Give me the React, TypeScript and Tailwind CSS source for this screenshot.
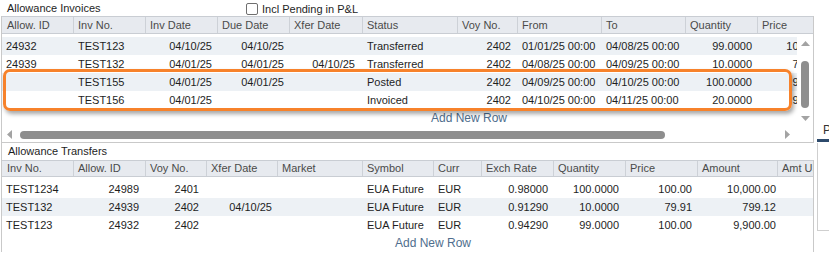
import type { ReactNode } from "react";

type Col = { label: string; w: string; pad: string; right?: boolean };

// widths include the 1px header divider, so the dividers land where the grid draws them
const INVOICE_COLS: Col[] = [
  { label: "Allow. ID", w: "w-[72px]", pad: "pl-[4px]" },
  { label: "Inv No.", w: "w-[72px]", pad: "pl-[4px]" },
  { label: "Inv Date", w: "w-[72px]", pad: "pr-[6px]", right: true },
  { label: "Due Date", w: "w-[72px]", pad: "pr-[6px]", right: true },
  { label: "Xfer Date", w: "w-[73px]", pad: "pr-[8px]", right: true },
  { label: "Status", w: "w-[95px]", pad: "pl-[4px]" },
  { label: "Voy No.", w: "w-[60px]", pad: "pr-[7px]", right: true },
  { label: "From", w: "w-[84px]", pad: "pl-[4px]" },
  { label: "To", w: "w-[84px]", pad: "pl-[4px]" },
  { label: "Quantity", w: "w-[72px]", pad: "pr-[6px]", right: true },
  { label: "Price", w: "w-[72px]", pad: "pr-[10px]", right: true },
];

const INVOICE_ROWS = [
  ["24932", "TEST123", "04/10/25", "04/10/25", "", "Transferred", "2402", "01/01/25 00:00", "04/08/25 00:00", "99.0000", "100.00"],
  ["24939", "TEST132", "04/01/25", "04/01/25", "04/10/25", "Transferred", "2402", "04/08/25 00:00", "04/09/25 00:00", "10.0000", "79.91"],
  ["", "TEST155", "04/01/25", "04/01/25", "", "Posted", "2402", "04/09/25 00:00", "04/10/25 00:00", "100.0000", "95.00"],
  ["", "TEST156", "04/01/25", "", "", "Invoiced", "2402", "04/10/25 00:00", "04/11/25 00:00", "20.0000", "95.00"],
];

const TRANSFER_COLS: Col[] = [
  { label: "Inv No.", w: "w-[72px]", pad: "pl-[4px]" },
  { label: "Allow. ID", w: "w-[72px]", pad: "pr-[7px]", right: true },
  { label: "Voy No.", w: "w-[61px]", pad: "pr-[8px]", right: true },
  { label: "Xfer Date", w: "w-[71px]", pad: "pr-[6px]", right: true },
  { label: "Market", w: "w-[85px]", pad: "pl-[4px]" },
  { label: "Symbol", w: "w-[71px]", pad: "pl-[4px]" },
  { label: "Curr", w: "w-[48px]", pad: "pl-[4px]" },
  { label: "Exch Rate", w: "w-[72px]", pad: "pr-[6px]", right: true },
  { label: "Quantity", w: "w-[72px]", pad: "pr-[7px]", right: true },
  { label: "Price", w: "w-[72px]", pad: "pr-[6px]", right: true },
  { label: "Amount", w: "w-[80px]", pad: "pr-[2px]", right: true },
  { label: "Amt USD", w: "w-[85px]", pad: "pr-[6px]", right: true },
];

const TRANSFER_ROWS = [
  ["TEST1234", "24989", "2401", "", "", "EUA Future", "EUR", "0.98000", "100.0000", "100.00", "10,000.00", "9,800.00"],
  ["TEST132", "24939", "2402", "04/10/25", "", "EUA Future", "EUR", "0.91290", "10.0000", "79.91", "799.12", "729.28"],
  ["TEST123", "24932", "2402", "", "", "EUA Future", "EUR", "0.94290", "99.0000", "100.00", "9,900.00", "9,335.32"],
];

function HeaderRow({ cols, h }: { cols: Col[]; h: string }) {
  return (
    <div className={`${h} flex shrink-0 overflow-hidden border-y border-[#c9cdd3] bg-[#e7eaef] text-[#4a4a4a]`}>
      {cols.map((c, i) => (
        <div
          key={c.label}
          className={`${c.w} ${i === 0 ? "pl-[5px]" : "pl-[4px]"} flex shrink-0 items-center overflow-hidden whitespace-nowrap border-r border-[#cdd1d7]`}
        >
          {c.label}
        </div>
      ))}
    </div>
  );
}

function DataRow({ cols, cells, striped }: { cols: Col[]; cells: string[]; striped: boolean }) {
  return (
    <div className={`flex h-[18px] items-center ${striped ? "bg-[#edf1f5]" : "bg-white"}`}>
      {cols.map((c, i) => (
        <div
          key={c.label}
          className={`${c.w} ${c.pad} ${c.right ? "justify-end" : ""} flex shrink-0 overflow-hidden whitespace-nowrap`}
        >
          {cells[i]}
        </div>
      ))}
    </div>
  );
}

function AddNewRow({ offset }: { offset: string }) {
  return (
    <div className={`${offset} flex h-[18px] items-center text-[12px] text-[#4f6e8d]`}>Add New Row</div>
  );
}

function Arrow({ dir }: { dir: "up" | "down" | "left" | "right" }) {
  const pts = {
    up: "0,5 4.5,0 9,5",
    down: "0,0 9,0 4.5,5",
    left: "5,0 5,9 0,4.5",
    right: "0,0 5,4.5 0,9",
  }[dir];
  const vert = dir === "up" || dir === "down";
  return (
    <svg width={vert ? 9 : 5} height={vert ? 5 : 9} className="shrink-0">
      <polygon points={pts} fill="#a3a3a3" />
    </svg>
  );
}

function Section({ children }: { children: ReactNode }) {
  return <div className="ml-[1px] flex w-[813px] flex-col border-x border-[#c9c9c9]">{children}</div>;
}

export default function App() {
  return (
    <div className="relative flex h-[257px] w-[829px] overflow-hidden bg-white font-['Liberation_Sans',Arial,sans-serif] text-[11px] leading-none text-[#1e1e1e]">
      <div className="flex w-[814px] shrink-0 flex-col">
        {/* Allowance Invoices */}
        <div className="flex h-[16px] items-center pl-[7px]">
          <span className="w-[239px] shrink-0">Allowance Invoices</span>
          <span className="mt-[2px] h-[12px] w-[12px] shrink-0 rounded-[2px] border border-[#6f6f6f] bg-white" />
          <span className="ml-[4px] mt-[2px]">Incl Pending in P&amp;L</span>
        </div>
        <Section>
          <HeaderRow cols={INVOICE_COLS} h="h-[18px]" />
          <div className="flex h-[92px]">
            <div className="flex-1 overflow-hidden pt-[3px]">
              {INVOICE_ROWS.map((r, i) => (
                <DataRow key={i} cols={INVOICE_COLS} cells={r} striped={i % 2 === 0} />
              ))}
              <AddNewRow offset="pl-[429px]" />
            </div>
            <div className="flex w-[16px] shrink-0 flex-col items-center pt-[7px]">
              <Arrow dir="up" />
              <div className="mt-[15px] h-[47px] w-[8px] rounded-full bg-[#8e8e8e]" />
              <div className="mt-[8px]">
                <Arrow dir="down" />
              </div>
            </div>
          </div>
          <div className="flex h-[17px] items-center border-b border-[#c9c9c9] pl-[5px] pt-[1px]">
            <Arrow dir="left" />
            <div className="ml-[8px] h-[8px] w-[645px] rounded-full bg-[#8e8e8e]" />
            <div className="ml-[120px]">
              <Arrow dir="right" />
            </div>
          </div>
        </Section>

        {/* Allowance Transfers */}
        <div className="ml-[1px] flex h-[17px] items-center border-l border-[#c9c9c9] pl-[6px]">
          Allowance Transfers
        </div>
        <Section>
          <HeaderRow cols={TRANSFER_COLS} h="h-[17px]" />
          <div className="overflow-hidden pt-[3px]">
            {TRANSFER_ROWS.map((r, i) => (
              <DataRow key={i} cols={TRANSFER_COLS} cells={r} striped={i % 2 === 1} />
            ))}
            <AddNewRow offset="pl-[393px]" />
          </div>
        </Section>
      </div>

      {/* side panel tab, mostly cut off */}
      <div className="ml-[3px] flex flex-1 flex-col pt-[124px]">
        <div className="h-[15px] pl-[6px] text-[12px] text-[#333]">P</div>
        <div className="h-[3px] bg-[#2d4a6c]" />
        <div className="mt-[1px] h-[88px] border-b border-l border-[#cfcfcf]" />
      </div>

      {/* orange annotation around the two new rows */}
      <div className="absolute left-[3px] top-[69px] h-[42px] w-[789px] rounded-[7px] border-[3px] border-[#f7822b] shadow-[2px_3px_4px_rgba(0,0,0,0.35)]" />
    </div>
  );
}
